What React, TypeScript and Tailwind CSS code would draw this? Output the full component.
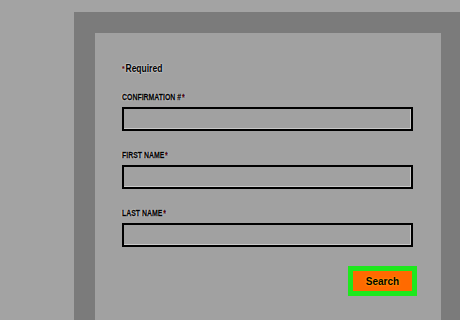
export default function App() {
  const halo = "[text-shadow:0_0_1px_#fff,0_0_2px_#fff]";
  const fields = ["CONFIRMATION #", "FIRST NAME", "LAST NAME"];

  return (
    <div className="w-[460px] h-[320px] bg-[#a3a3a3] pt-[12px] pl-[74px] flex overflow-hidden font-['Liberation_Sans',Arial,sans-serif]">
      <div className="flex-1 bg-[#7b7b7b] pt-[21px] pl-[21px] pr-[19px] flex">
        <div className="flex-1 bg-[#a1a1a1] pl-[27px] pr-[28px] pt-[29px] flex flex-col">
          <p className="flex h-[14px]">
            <span
              className={`origin-left scale-x-[0.85] text-[10px] leading-[14px] font-bold text-black whitespace-nowrap [-webkit-text-stroke:0.2px_#000] ${halo}`}
            >
              <span className="text-[#8a0010] text-[8px] align-top mr-[1px]">*</span>
              Required
            </span>
          </p>

          {fields.map((f, i) => (
            <div key={f} className={i === 0 ? "mt-[16px]" : "mt-[19px]"}>
              <p className="flex h-[10px]">
                <span
                  className={`origin-left scale-x-[0.77] text-[9px] leading-[10px] font-bold text-black whitespace-nowrap [-webkit-text-stroke:0.3px_#000] ${halo}`}
                >
                  {f}
                  <span className="text-[#8a0010] ml-[1px]">*</span>
                </span>
              </p>
              <div className="mt-[5px] h-[24px] border-2 border-black bg-[#a1a1a1] shadow-[inset_-1px_-1px_0_#c8c8c8]" />
            </div>
          ))}

          <div className="mt-[19px] flex justify-end -mr-[4px]">
            <button className="w-[69px] h-[30px] bg-[#ff6a00] border-[5px] border-[#1ee81e] text-[10px] font-bold text-black [text-shadow:0_0_2px_#ffd000]">
              Search
            </button>
          </div>
        </div>
      </div>
    </div>
  );
}
